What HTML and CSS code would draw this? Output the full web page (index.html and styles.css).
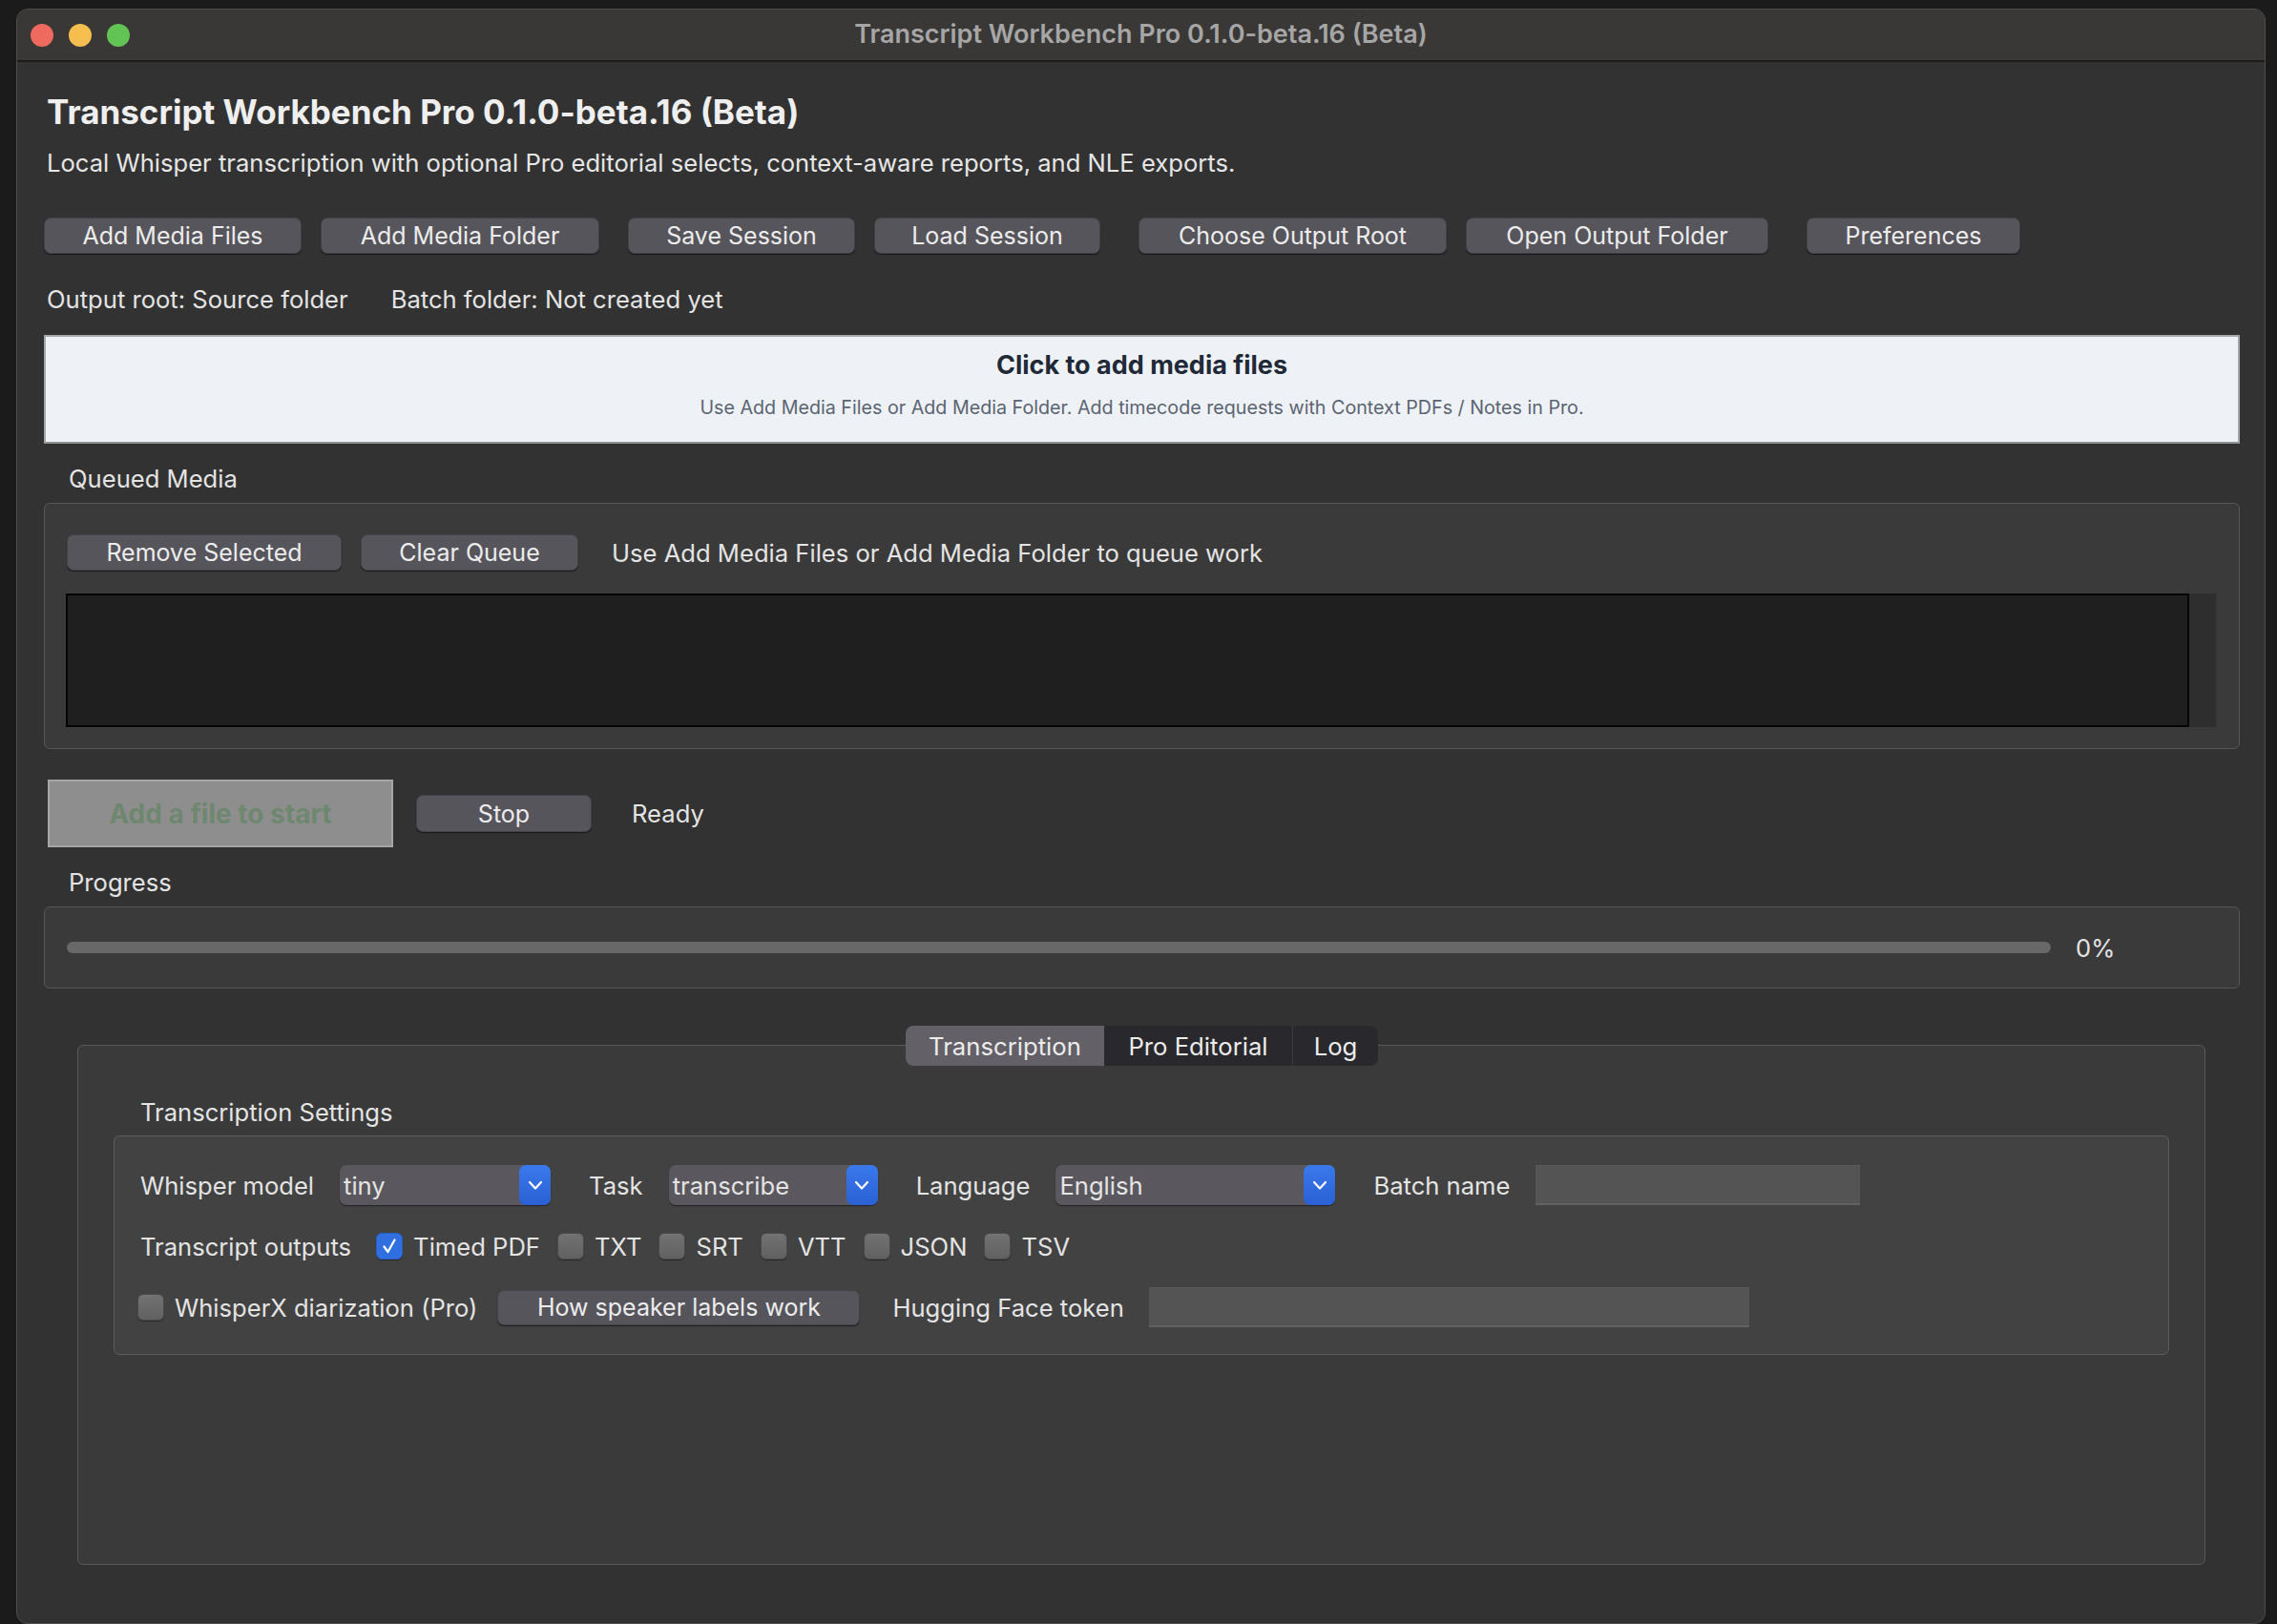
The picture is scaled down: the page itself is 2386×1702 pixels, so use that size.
FILE: index.html
```html
<!DOCTYPE html>
<html lang="en">
<head>
    <meta charset="UTF-8">
    <meta name="viewport" content="width=device-width, initial-scale=1.0">
    <title>Transcript Workbench Pro</title>
    <link rel="stylesheet" href="styles.css">
</head>
<body>
    <div class="desktop">
        <div class="window">
            <div class="titlebar">
                <div class="lights">
                    <span class="light red"></span>
                    <span class="light yellow"></span>
                    <span class="light green"></span>
                </div>
                <div class="window-title">Transcript Workbench Pro 0.1.0-beta.16 (Beta)</div>
                <div></div>
            </div>

            <main class="content">
                <h1>Transcript Workbench Pro 0.1.0-beta.16 (Beta)</h1>
                <p class="subtitle">Local Whisper transcription with optional Pro editorial selects, context-aware reports, and NLE exports.</p>

                <div class="toolbar">
                    <button class="btn w-files">Add Media Files</button>
                    <button class="btn w-folder">Add Media Folder</button>
                    <button class="btn w-save gap-s">Save Session</button>
                    <button class="btn w-load">Load Session</button>
                    <button class="btn w-root gap-l">Choose Output Root</button>
                    <button class="btn w-open">Open Output Folder</button>
                    <button class="btn w-prefs gap-l">Preferences</button>
                </div>

                <div class="paths">
                    <span>Output root: Source folder</span>
                    <span>Batch folder: Not created yet</span>
                </div>

                <div class="dropzone">
                    <div class="drop-title">Click to add media files</div>
                    <div class="drop-hint">Use Add Media Files or Add Media Folder. Add timecode requests with Context PDFs / Notes in Pro.</div>
                </div>

                <div class="group-label">Queued Media</div>
                <section class="group queue">
                    <div class="queue-actions">
                        <button class="btn w-remove">Remove Selected</button>
                        <button class="btn w-clear">Clear Queue</button>
                        <span class="queue-hint">Use Add Media Files or Add Media Folder to queue work</span>
                    </div>
                    <div class="queue-list">
                        <div class="list-view"></div>
                        <div class="scroll-track"></div>
                    </div>
                </section>

                <div class="run-row">
                    <button class="start-btn" disabled>Add a file to start</button>
                    <button class="btn w-stop">Stop</button>
                    <span class="status">Ready</span>
                </div>

                <div class="group-label">Progress</div>
                <section class="group progress">
                    <div class="bar"></div>
                    <span class="percent">0%</span>
                </section>

                <div class="tabs">
                    <div class="tab active">Transcription</div>
                    <div class="tab">Pro Editorial</div>
                    <div class="tab last">Log</div>
                </div>
                <section class="tab-pane">
                    <div class="pane-label">Transcription Settings</div>
                    <div class="settings">
                        <div class="row">
                            <span class="field-label">Whisper model</span>
                            <div class="combo w-model"><span>tiny</span><span class="arrow"><svg width="16" height="11" viewBox="0 0 16 11"><path d="M2 2 L8 8.5 L14 2" fill="none" stroke="#fff" stroke-width="2.2" stroke-linecap="round" stroke-linejoin="round"/></svg></span></div>
                            <span class="field-label after">Task</span>
                            <div class="combo w-task"><span>transcribe</span><span class="arrow"><svg width="16" height="11" viewBox="0 0 16 11"><path d="M2 2 L8 8.5 L14 2" fill="none" stroke="#fff" stroke-width="2.2" stroke-linecap="round" stroke-linejoin="round"/></svg></span></div>
                            <span class="field-label after">Language</span>
                            <div class="combo w-lang"><span>English</span><span class="arrow"><svg width="16" height="11" viewBox="0 0 16 11"><path d="M2 2 L8 8.5 L14 2" fill="none" stroke="#fff" stroke-width="2.2" stroke-linecap="round" stroke-linejoin="round"/></svg></span></div>
                            <span class="field-label after">Batch name</span>
                            <div class="input w-batch"></div>
                        </div>
                        <div class="row">
                            <span class="field-label outputs">Transcript outputs</span>
                            <label class="check"><span class="box on"><svg width="28" height="28" viewBox="0 0 28 28"><path d="M8.5 14.5 L12.5 20 L19.5 7.5" fill="none" stroke="#fff" stroke-width="2.2" stroke-linecap="round" stroke-linejoin="round"/></svg></span>Timed PDF</label>
                            <label class="check"><span class="box"></span>TXT</label>
                            <label class="check"><span class="box"></span>SRT</label>
                            <label class="check"><span class="box"></span>VTT</label>
                            <label class="check"><span class="box"></span>JSON</label>
                            <label class="check"><span class="box"></span>TSV</label>
                        </div>
                        <div class="row">
                            <label class="check first"><span class="box"></span>WhisperX diarization (Pro)</label>
                            <button class="btn w-speaker">How speaker labels work</button>
                            <span class="field-label token">Hugging Face token</span>
                            <div class="input w-token"></div>
                        </div>
                    </div>
                </section>
            </main>
        </div>
    </div>
</body>
</html>
```

FILE: styles.css
```css
* {
    box-sizing: border-box;
}

body {
    margin: 0;
    background: #1a1a1a;
    font-family: 'Inter', 'Liberation Sans', sans-serif;
    color: #e4e4e4;
    overflow: hidden;
}

.desktop {
    position: relative;
    width: 2386px;
    height: 1702px;
    background: #1b1b1b;
}

/* the app window sits on the desktop */
.window {
    position: absolute;
    left: 17px;
    top: 9px;
    width: 2357px;
    height: 1693px;
    background: #323232;
    border: 1px solid #4e4e4e;
    border-radius: 12px;
    overflow: hidden;
}

.titlebar {
    display: grid;
    grid-template-columns: 1fr auto 1fr;
    align-items: center;
    height: 55px;
    background: #393836;
    border-bottom: 2px solid #1c1c1c;
}

.lights {
    display: flex;
    gap: 16px;
    padding-left: 14px;
}

.light {
    width: 24px;
    height: 24px;
    border-radius: 50%;
}

.red { background: #ee6a5e; }
.yellow { background: #f5be4f; }
.green { background: #61c454; }

.window-title {
    font-size: 27px;
    font-weight: 600;
    color: #a6a6a6;
    margin-top: -3px;
}

.content {
    display: flex;
    flex-direction: column;
    padding: 0 26px 0 28px;
}

h1 {
    margin: 32px 0 0 3px;
    font-size: 35px;
    line-height: 40px;
    font-weight: 700;
    color: #efefef;
}

.subtitle {
    margin: 19px 0 0 3px;
    font-size: 25.6px;
    line-height: 30px;
    color: #e6e6e6;
}

.btn {
    height: 38px;
    padding: 0;
    font-family: inherit;
    font-size: 25px;
    color: #ececec;
    background: #57555c;
    border: 1px solid #444248;
    border-radius: 7px;
    box-shadow: 0 1px 1px rgba(0, 0, 0, 0.55);
}

.toolbar {
    display: flex;
    gap: 20px;
    margin-top: 42px;
}

.gap-s { margin-left: 10px; }
.gap-l { margin-left: 20px; }

.w-files { width: 270px; }
.w-folder { width: 292px; }
.w-save { width: 238px; }
.w-load { width: 237px; }
.w-root { width: 323px; }
.w-open { width: 317px; }
.w-prefs { width: 224px; }

.paths {
    display: flex;
    gap: 45px;
    margin: 33px 0 0 3px;
    font-size: 25.6px;
    line-height: 30px;
}

.dropzone {
    height: 114px;
    margin-top: 22px;
    padding-top: 15px;
    background: #eef2f6;
    border: 2px solid #a3a7ab;
    border-bottom-color: #8f9296;
    text-align: center;
}

.drop-title {
    font-size: 27px;
    line-height: 30px;
    font-weight: 700;
    color: #1f2937;
}

.drop-hint {
    margin-top: 17px;
    font-size: 19.7px;
    line-height: 24px;
    color: #5b6472;
}

.group-label {
    margin: 22px 0 0 26px;
    font-size: 25.6px;
    line-height: 30px;
}

.group {
    margin-top: 10px;
    background: #3a3a3a;
    border: 1px solid #575757;
    border-radius: 6px;
}

.queue {
    height: 258px;
    padding: 32px 24px 0 23px;
}

.queue-actions {
    display: flex;
    align-items: center;
    gap: 20px;
}

.w-remove { width: 288px; }
.w-clear { width: 228px; }

.queue-hint {
    margin-left: 15px;
    font-size: 25.6px;
}

.queue-list {
    display: flex;
    height: 140px;
    margin-top: 24px;
    margin-left: -1px;
}

.list-view {
    flex: 1;
    background: #1f1f1f;
    border: 2px solid #050505;
}

.scroll-track {
    width: 28px;
    background: #2e2e2e;
}

.run-row {
    display: flex;
    align-items: center;
    margin-top: 32px;
}

.start-btn {
    width: 362px;
    height: 71px;
    margin-left: 4px;
    font-family: inherit;
    font-size: 28px;
    font-weight: 700;
    color: #6e876f;
    background: #8e8e8e;
    border: 2px solid #a6a6a6;
    border-radius: 0;
}

.w-stop {
    width: 184px;
    height: 39px;
    margin-left: 24px;
}

.status {
    margin-left: 42px;
    font-size: 25.6px;
}

.progress {
    display: flex;
    align-items: center;
    height: 86px;
    padding: 0 25px 0 23px;
}

.bar {
    flex: 1;
    height: 12px;
    border-radius: 6px;
    background: #686868;
}

.percent {
    width: 172px;
    padding-left: 26px;
    font-size: 25.6px;
}

/* tab widget */
.tabs {
    position: relative;
    z-index: 1;
    display: flex;
    align-self: center;
    height: 42px;
    margin: 39px 0 -22px;
    border-radius: 8px;
    overflow: hidden;
    background: #29282d;
}

.tab {
    display: flex;
    align-items: center;
    justify-content: center;
    font-size: 25.7px;
    color: #ececec;
}

.tab:nth-child(1) { width: 208px; }
.tab:nth-child(2) { width: 197px; }
.tab.last {
    width: 90px;
    border-left: 1px solid #3b3a40;
}

.tab.active {
    background: #636167;
}

.tab-pane {
    height: 545px;
    margin: 0 36px 0 35px;
    padding: 55px 37px 0 37px;
    background: #3a3a3a;
    border: 1px solid #5a5a5a;
    border-radius: 6px;
}

.pane-label {
    margin-left: 28px;
    font-size: 25.6px;
    line-height: 30px;
}

.settings {
    display: flex;
    flex-direction: column;
    gap: 22px;
    height: 230px;
    margin-top: 9px;
    padding: 30px 27px 0;
    background: #424242;
    border: 1px solid #5c5c5c;
    border-radius: 6px;
}

.row {
    display: flex;
    align-items: center;
    height: 42px;
    font-size: 25.6px;
}

.field-label {
    margin-right: 27px;
}

.field-label.after {
    margin-left: 40px;
}

.field-label.outputs {
    margin-right: 26px;
}

.field-label.token {
    margin: 0 26px 0 34px;
}

.combo {
    display: flex;
    align-items: center;
    justify-content: space-between;
    height: 42px;
    padding-left: 4px;
    background: #5a585e;
    border-radius: 7px;
    box-shadow: 0 1px 1px rgba(0, 0, 0, 0.5);
}

.combo .arrow {
    display: flex;
    align-items: center;
    justify-content: center;
    width: 33px;
    height: 42px;
    border-radius: 7px;
    background: linear-gradient(#3a79ec, #2a60d4);
}

.w-model { width: 221px; }
.w-task { width: 219px; }
.w-lang { width: 293px; }

.input {
    height: 42px;
    background: #545454;
    border-top: 1px solid #5a5a5a;
    border-bottom: 2px solid #616161;
}

.w-batch { width: 340px; }
.w-token { width: 629px; }

.check {
    display: flex;
    align-items: center;
    gap: 11px;
    margin-right: 18px;
}

.check.first {
    margin-left: -3px;
    margin-right: 21px;
}

.box {
    display: block;
    width: 28px;
    height: 28px;
    border-radius: 6px;
    background: linear-gradient(#727272, #616161);
    border: 1px solid #4a4a4a;
    box-shadow: 0 1px 1px rgba(0, 0, 0, 0.4);
}

.box.on {
    background: #2f6fe0;
    border-color: #2a5fc2;
}

.box svg {
    display: block;
    margin: -1px;
}

.w-speaker {
    width: 380px;
    height: 37px;
}
```
